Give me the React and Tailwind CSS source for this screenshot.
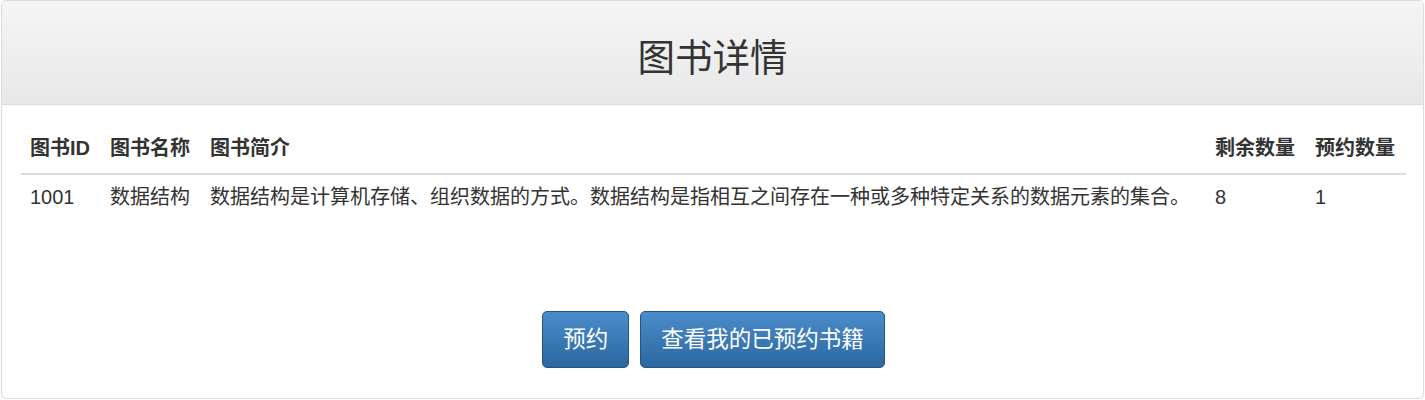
import React from "react";

const book = {
  id: "1001",
  name: "数据结构",
  intro:
    "数据结构是计算机存储、组织数据的方式。数据结构是指相互之间存在一种或多种特定关系的数据元素的集合。",
  remain: 8,
  reserved: 1,
};

const App = () => {
  return (
    <div
      className="px-[1px] text-[#333] bg-white"
      style={{ fontFamily: '"Liberation Sans", "Noto Sans CJK SC", sans-serif' }}
    >
      <div className="h-[399px] border border-[#ddd] rounded-[5px] shadow-[0_1px_2px_rgba(0,0,0,0.05)] overflow-hidden">
        <div className="h-[104px] flex items-center justify-center border-b border-[#ddd] bg-gradient-to-b from-[#f5f5f5] to-[#e8e8e8]">
          <h2 className="text-[37.5px] leading-[1.1] font-normal mt-[12px]">图书详情</h2>
        </div>

        <div className="pl-[19px] pr-[17px] pt-[19px]">
          <table className="w-full table-fixed border-collapse text-[20px] leading-[28.6px]">
            <thead>
              <tr className="border-b-2 border-[#ddd]">
                <th className="w-[80px] text-left font-bold pl-[9px] pr-[10px] py-[10px]">图书ID</th>
                <th className="w-[100px] text-left font-bold pl-[9px] pr-[10px] py-[10px]">图书名称</th>
                <th className="text-left font-bold pl-[9px] pr-[10px] py-[10px]">图书简介</th>
                <th className="w-[100px] text-left font-bold pl-[9px] pr-[10px] py-[10px]">剩余数量</th>
                <th className="w-[100px] text-left font-bold pl-[9px] pr-[10px] py-[10px]">预约数量</th>
              </tr>
            </thead>
            <tbody>
              <tr>
                <td className="pl-[9px] pr-[10px] py-[8px]">{book.id}</td>
                <td className="pl-[9px] pr-[10px] py-[8px]">{book.name}</td>
                <td className="pl-[9px] pr-[10px] py-[8px] whitespace-nowrap">{book.intro}</td>
                <td className="pl-[9px] pr-[10px] py-[8px]">{book.remain}</td>
                <td className="pl-[9px] pr-[10px] py-[8px]">{book.reserved}</td>
              </tr>
            </tbody>
          </table>

          <div className="flex justify-center gap-[11px] mt-[92px]">
            <button className="h-[57px] px-[20px] text-[22.5px] text-white rounded-[5px] border border-[#245580] bg-gradient-to-b from-[#4a8ccb] to-[#2c689f]">
              预约
            </button>
            <button className="h-[57px] px-[20px] text-[22.5px] text-white rounded-[5px] border border-[#245580] bg-gradient-to-b from-[#4a8ccb] to-[#2c689f]">
              查看我的已预约书籍
            </button>
          </div>
        </div>
      </div>
    </div>
  );
};

export default App;
